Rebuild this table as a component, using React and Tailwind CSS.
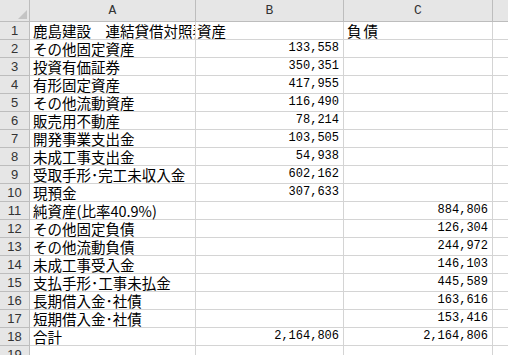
import React from "react";

const rows = [
  ["鹿島建設　連結貸借対照表", "資産", "負債", true],
  ["その他固定資産", "133,558", ""],
  ["投資有価証券", "350,351", ""],
  ["有形固定資産", "417,955", ""],
  ["その他流動資産", "116,490", ""],
  ["販売用不動産", "78,214", ""],
  ["開発事業支出金", "103,505", ""],
  ["未成工事支出金", "54,938", ""],
  ["受取手形･完工未収入金", "602,162", ""],
  ["現預金", "307,633", ""],
  ["純資産(比率40.9%)", "", "884,806"],
  ["その他固定負債", "", "126,304"],
  ["その他流動負債", "", "244,972"],
  ["未成工事受入金", "", "146,103"],
  ["支払手形･工事未払金", "", "445,589"],
  ["長期借入金･社債", "", "163,616"],
  ["短期借入金･社債", "", "153,416"],
  ["合計", "2,164,806", "2,164,806"],
];

const cols = "grid grid-cols-[30px_166px_148px_149px_1fr]";
const jp = "font-['Noto_Sans_CJK_JP',sans-serif] text-[14.5px] leading-[17px]";
const num = "font-['Liberation_Mono',monospace] text-[12px] leading-[17px]";

export default function App() {
  return (
    <div className="w-[508px] h-[355px] overflow-hidden bg-white text-black">
      {/* column header */}
      <div className={`${cols} h-[22px] bg-[#e6e6e6] border-b border-[#bdbdbd]`}>
        <div className="relative border-r border-[#bdbdbd]">
          <svg className="absolute left-[18px] top-[10px]" width="9" height="9" viewBox="0 0 9 9">
            <polygon points="9,0 9,9 0,9" fill="#c4c4c4" />
          </svg>
        </div>
        {["A", "B", "C", ""].map((c, i) => (
          <div
            key={i}
            className={`flex items-end justify-center pb-[1px] font-['Liberation_Mono',monospace] text-[13px] leading-[18px] text-[#333] ${i < 3 ? "border-r border-[#bdbdbd]" : ""}`}
          >
            {c}
          </div>
        ))}
      </div>

      {rows.map((r, i) => (
        <div key={i} className={`${cols} h-[18px]`}>
          <div className="flex items-center justify-center bg-[#e6e6e6] border-r border-b border-[#bdbdbd] font-['Liberation_Sans',sans-serif] text-[13px] leading-[17px] text-[#333]">
            {i + 1}
          </div>
          <div className={`flex items-center pl-[3px] border-r border-b border-[#d4d4d4] whitespace-nowrap ${i === 0 ? "overflow-hidden" : ""} ${jp}`}>
            {r[0]}
          </div>
          <div className={`flex items-center border-r border-b border-[#d4d4d4] ${r[3] ? `pl-[1px] ${jp}` : `justify-end pr-[4px] ${num}`}`}>
            {r[1]}
          </div>
          <div className={`flex items-center border-r border-b border-[#d4d4d4] ${r[3] ? `pl-[3px] ${jp} tracking-[2px]` : `justify-end pr-[4px] ${num}`}`}>
            {r[2]}
          </div>
          <div className="border-b border-[#d4d4d4]" />
        </div>
      ))}

      <div className={`${cols} h-[18px]`}>
        <div className="flex items-start justify-center bg-[#e6e6e6] border-r border-[#bdbdbd] font-['Liberation_Sans',sans-serif] text-[13px] leading-[17px] text-[#333]">
          19
        </div>
        <div className="border-r border-[#d4d4d4]" />
        <div className="border-r border-[#d4d4d4]" />
        <div className="border-r border-[#d4d4d4]" />
        <div />
      </div>
    </div>
  );
}
